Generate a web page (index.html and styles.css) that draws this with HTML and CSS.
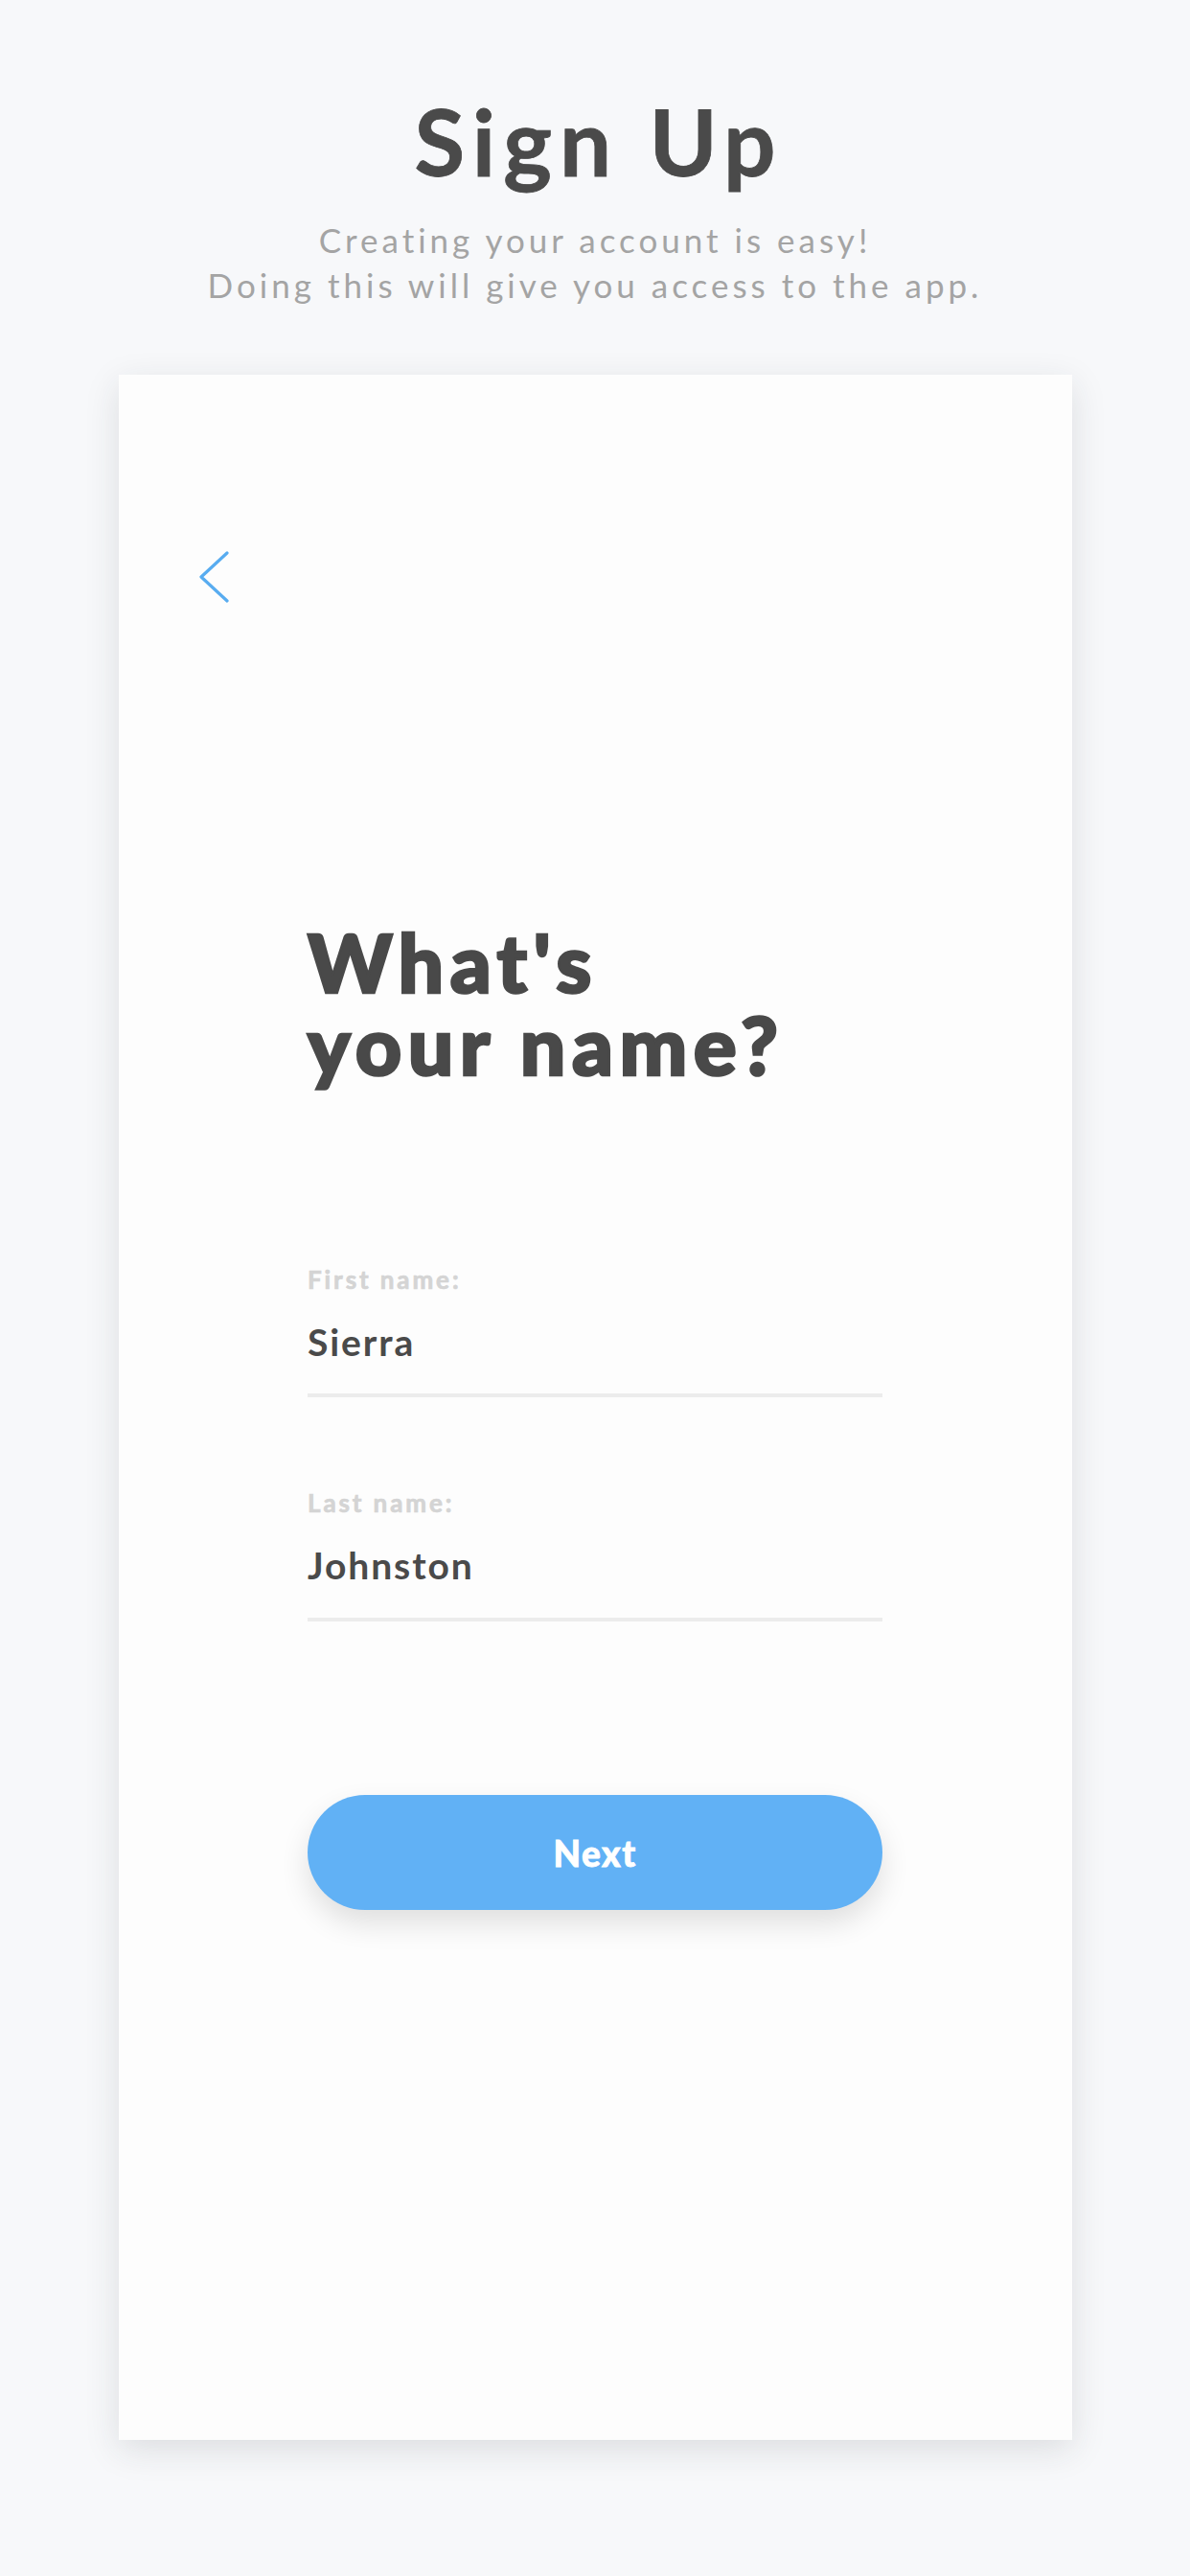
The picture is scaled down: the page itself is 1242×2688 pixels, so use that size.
FILE: index.html
```html
<!DOCTYPE html>
<html lang="en">
<head>
<meta charset="utf-8">
<title>Sign Up</title>
<link rel="stylesheet" href="styles.css">
</head>
<body>
<main class="page">
  <header class="intro">
    <h1 class="intro-title">Sign Up</h1>
    <p class="intro-text">Creating your account is easy!<br>Doing this will give you access to the app.</p>
  </header>
  <section class="card">
    <button class="back" type="button" aria-label="Back">
      <svg class="back-icon" width="32" height="56" viewBox="0 0 32 56"><path d="M29 2 L2 27 L29 52" fill="none" stroke="#58acf0" stroke-width="3.2" stroke-linecap="round" stroke-linejoin="round"/></svg>
    </button>
    <div class="form">
      <h2 class="question"><span class="question-line">What's</span><span class="question-line">your name?</span></h2>
      <div class="field field-first">
        <div class="field-label">First name:</div>
        <div class="field-value">Sierra</div>
      </div>
      <div class="field field-last">
        <div class="field-label">Last name:</div>
        <div class="field-value">Johnston</div>
      </div>
      <button class="next" type="button">Next</button>
    </div>
  </section>
</main>
</body>
</html>
```

FILE: styles.css
```css
* { box-sizing: border-box; }
html, body { margin: 0; padding: 0; }
body {
  background: #f7f8fa;
  font-family: "Lato", "Open Sans", sans-serif;
  color: #4a4a4a;
  width: 1242px;
  height: 2688px;
  overflow: hidden;
}
.page {
  display: flex;
  flex-direction: column;
  align-items: center;
}
.intro {
  display: flex;
  flex-direction: column;
  align-items: center;
  padding-top: 89px;
}
.intro-title {
  margin: 0;
  font-size: 96px;
  line-height: 1.2;
  font-weight: 700;
  color: #4a4a4a;
  letter-spacing: 8px;
  text-indent: 8px;
  -webkit-text-stroke: 0.8px #4a4a4a;
}
.intro-text {
  margin: 23px 0 0;
  font-size: 35px;
  line-height: 47px;
  font-weight: 400;
  color: #a4a4a4;
  text-align: center;
  letter-spacing: 4px;
}
.card {
  margin-top: 70px;
  width: 995px;
  height: 2155px;
  background: #fdfdfd;
  box-shadow: 0 10px 34px rgba(40, 44, 52, 0.13);
  display: flex;
  flex-direction: column;
  padding-top: 184px;
}
.back {
  align-self: flex-start;
  margin-left: 84px;
  padding: 0;
  border: 0;
  background: none;
  width: 32px;
  height: 56px;
}
.back-icon { display: block; }
.form {
  width: 600px;
  margin: 330px auto 0;
  display: flex;
  flex-direction: column;
}
.question {
  margin: 0;
  display: flex;
  flex-direction: column;
  font-size: 84px;
  line-height: 86px;
  font-weight: 900;
  color: #494949;
  letter-spacing: 6.5px;
  -webkit-text-stroke: 2.6px #494949;
}
.question-line { display: block; }
.field {
  display: flex;
  flex-direction: column;
  border-bottom: 4px solid #ececec;
}
.field-first { margin-top: 186px; padding-bottom: 30px; }
.field-last { margin-top: 94px; padding-bottom: 31px; }
.field-label {
  font-size: 26px;
  line-height: 32px;
  font-weight: 700;
  color: #d4d4d4;
  letter-spacing: 2.9px;
  -webkit-text-stroke: 0.7px #d4d4d4;
}
.field-value {
  margin-top: 25px;
  font-size: 39px;
  line-height: 48px;
  font-weight: 700;
  color: #4a4a4a;
  letter-spacing: 1.9px;
}
.next {
  margin-top: 181px;
  height: 120px;
  width: 600px;
  border: 0;
  border-radius: 60px;
  background: #61b1f5;
  color: #ffffff;
  font-family: "Lato", "Open Sans", sans-serif;
  font-size: 37px;
  font-weight: 900;
  letter-spacing: 1.5px;
  -webkit-text-stroke: 0.8px #ffffff;
  box-shadow: 0 14px 30px rgba(0, 0, 0, 0.12);
}
```
